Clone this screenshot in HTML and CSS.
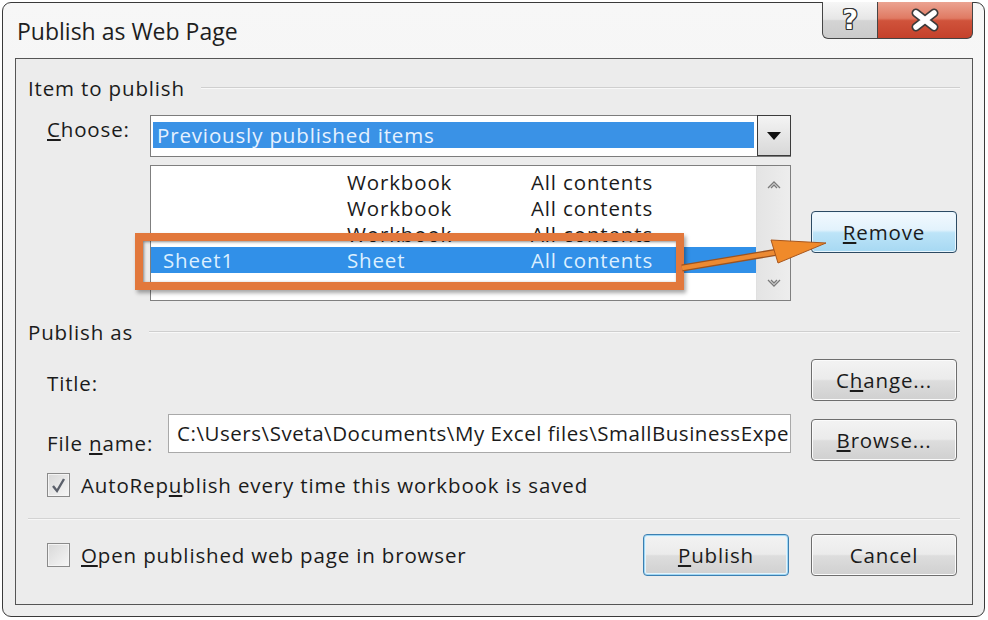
FILE: index.html
```html
<!DOCTYPE html>
<html lang="en">
<head>
  <meta charset="UTF-8">
  <title>Publish as Web Page</title>
  <link rel="stylesheet" href="styles.css">
</head>
<body>
  <div class="window">
    <div class="titlebar">
      <div class="title">Publish as Web Page</div>
      <div class="caption">
        <div class="cap-btn help"><span class="help-glyph">?</span></div>
        <div class="cap-btn close">
          <svg width="32" height="24" viewBox="0 0 32 24">
            <path d="M7 5 L25 19 M25 5 L7 19" stroke="#3b3b3b" stroke-width="9" stroke-linecap="round"/>
            <path d="M7 5 L25 19 M25 5 L7 19" stroke="#ffffff" stroke-width="5.5" stroke-linecap="round"/>
          </svg>
        </div>
      </div>
    </div>

    <div class="panel">
      <div class="group-head">Item to publish</div>

      <div class="choose-grid">
        <div class="label choose-label"><u>C</u>hoose:</div>
        <div class="combo">
          <div class="combo-value">Previously published items</div>
          <div class="combo-arrow">
            <svg width="14" height="8" viewBox="0 0 14 8"><path d="M0 0 H14 L7 8 Z" fill="#111"/></svg>
          </div>
        </div>

        <div class="listbox">
          <div class="list-rows">
            <div class="list-row"><span></span><span>Workbook</span><span>All contents</span></div>
            <div class="list-row"><span></span><span>Workbook</span><span>All contents</span></div>
            <div class="list-row"><span></span><span>Workbook</span><span>All contents</span></div>
            <div class="list-row selected"><span>Sheet1</span><span>Sheet</span><span>All contents</span></div>
          </div>
          <div class="scrollbar">
            <svg width="16" height="10" viewBox="0 0 16 10"><path d="M2 8 L8 2 L14 8 M5 8 L8 5 L11 8" fill="none" stroke="#7a7a7a" stroke-width="1.3"/></svg>
            <svg width="16" height="10" viewBox="0 0 16 10"><path d="M2 2 L8 8 L14 2 M5 2 L8 5 L11 2" fill="none" stroke="#7a7a7a" stroke-width="1.3"/></svg>
          </div>
        </div>
        <div class="btn hot remove-btn"><u>R</u>emove</div>
      </div>

      <div class="group-head second">Publish as</div>

      <div class="publish-grid">
        <div class="label">Title:</div>
        <div></div>
        <div class="btn">C<u>h</u>ange...</div>

        <div class="label">File <u>n</u>ame:</div>
        <div class="textbox">C:\Users\Sveta\Documents\My Excel files\SmallBusinessExpenses.htm</div>
        <div class="btn"><u>B</u>rowse...</div>
      </div>

      <div class="check-row">
        <div class="checkbox">
          <svg width="17" height="17" viewBox="0 0 17 17"><path d="M3 9 L7 14 L14 2" fill="none" stroke="#5a5f6a" stroke-width="2.4"/></svg>
        </div>
        <div class="label">AutoRep<u>u</u>blish every time this workbook is saved</div>
      </div>

      <div class="separator"></div>

      <div class="bottom-row">
        <div class="checkbox"></div>
        <div class="label"><u>O</u>pen published web page in browser</div>
        <div class="btn default publish-btn"><u>P</u>ublish</div>
        <div class="btn">Cancel</div>
      </div>
    </div>
  </div>

  <!-- annotation overlay -->
  <div class="callout"></div>
  <svg class="callout-arrow" width="160" height="50" viewBox="674 226 160 50">
    <path d="M682 268 L778 252" stroke="#9c5320" stroke-width="7"/>
    <path d="M682 268 L778 252" stroke="#ec8a33" stroke-width="4.5"/>
    <path d="M771 240 L826 243 L778 263 Z" fill="#f08a2a" stroke="#a8571e" stroke-width="1"/>
  </svg>
</body>
</html>
```

FILE: styles.css
```css
* {
  box-sizing: border-box;
}

body {
  margin: 0;
  background: #ffffff;
  font-family: "Open Sans", "Noto Sans", sans-serif;
  color: #1b1b1b;
  position: relative;
  width: 988px;
  height: 620px;
  overflow: hidden;
}

.window {
  margin: 2px 3px 3px 2px;
  height: 615px;
  border: 1px solid #3a3a3a;
  border-radius: 9px;
  background: linear-gradient(#f7f7f7, #eeeeee);
  padding: 0 11px 11px 12px;
  display: flex;
  flex-direction: column;
}

.titlebar {
  height: 55px;
  display: flex;
  align-items: flex-start;
}

.title {
  margin: 14px 0 0 2px;
  font-size: 23px;
  line-height: 28px;
  color: #1e1e1e;
}

.caption {
  margin-left: auto;
  margin-top: -1px;
  display: flex;
}

.cap-btn {
  height: 37px;
  border: 1px solid #454545;
  border-top: none;
  display: flex;
  align-items: center;
  justify-content: center;
}

.help {
  width: 56px;
  border-radius: 0 0 0 6px;
  background: linear-gradient(#f7f7f7 0%, #e6e6e6 48%, #d4d4d4 52%, #cbcbcb 100%);
}

.help-glyph {
  font-family: "DejaVu Sans", sans-serif;
  font-size: 27px;
  line-height: 30px;
  font-weight: bold;
  color: #ffffff;
  text-shadow: 1px 0 #333, -1px 0 #333, 0 1px #333, 0 -1px #333,
    1px 1px #333, -1px -1px #333, 1px -1px #333, -1px 1px #333;
}

.close {
  width: 95px;
  border-left: none;
  border-radius: 0 0 6px 0;
  background: linear-gradient(#eba391 0%, #e07a63 45%, #d0533b 52%, #c4412b 100%);
}

.panel {
  flex: 1;
  border: 1px solid #555555;
  background: #ececec;
  padding: 0 12px;
}

.group-head {
  display: flex;
  align-items: center;
  gap: 16px;
  font-size: 20.5px;
  letter-spacing: 0.85px;
  line-height: 24px;
  margin-top: 17px;
}

.group-head.second {
  margin-top: 19px;
}

.group-head::after {
  content: "";
  flex: 1;
  border-top: 1px solid #cfcfcf;
  border-bottom: 1px solid #f8f8f8;
}

.label {
  font-size: 20.5px;
  letter-spacing: 0.85px;
  line-height: 24px;
  white-space: nowrap;
}

.choose-grid {
  margin: 15px 0 0 19px;
  display: grid;
  grid-template-columns: 83px 641px 146px;
  column-gap: 20px;
  row-gap: 8px;
  align-items: start;
}

.choose-label {
  padding-top: 2px;
}

.combo {
  grid-column: 2;
  height: 42px;
  border: 1px solid #7c7c7c;
  background: #ffffff;
  display: flex;
  align-items: flex-start;
}

.combo-value {
  width: 601px;
  height: 26px;
  margin: 6px 0 0 2px;
  background: #3a92e6;
  color: #e6f1ff;
  font-size: 20.5px;
  letter-spacing: 0.85px;
  line-height: 26px;
  padding-left: 4px;
}

.combo-arrow {
  margin-left: auto;
  width: 34px;
  height: 41px;
  margin-top: -1px;
  margin-right: -1px;
  border: 1px solid #3c3c3c;
  background: linear-gradient(#f4f4f4, #d8d8d8);
  display: flex;
  align-items: center;
  justify-content: center;
}

.listbox {
  grid-column: 2;
  height: 136px;
  border: 1px solid #7f7f7f;
  background: #ffffff;
  display: flex;
}

.list-rows {
  flex: 1;
  padding-top: 3px;
}

.list-row {
  display: grid;
  grid-template-columns: 184px 184px 1fr;
  padding-left: 12px;
  height: 26px;
  font-size: 20.5px;
  letter-spacing: 0.85px;
  line-height: 26px;
  white-space: nowrap;
}

.list-row.selected {
  background: #3190e8;
  color: #dcefff;
}

.scrollbar {
  width: 34px;
  background: linear-gradient(90deg, #e4e4e4, #ededed);
  border-left: 1px solid #e0e0e0;
  display: flex;
  flex-direction: column;
  align-items: center;
  justify-content: space-between;
  padding: 14px 0 12px;
}

.btn {
  width: 146px;
  height: 42px;
  border: 1px solid #6e6e6e;
  border-radius: 4px;
  background: linear-gradient(#f3f3f3 0%, #ebebeb 48%, #dddddd 52%, #d0d0d0 100%);
  font-size: 20.5px;
  letter-spacing: 0.85px;
  line-height: 40px;
  text-align: center;
  white-space: nowrap;
  box-shadow: inset 0 0 0 1px #fbfbfb;
}

.remove-btn {
  grid-column: 3;
  grid-row: 2;
  margin-top: 46px;
}

.btn.hot {
  border-color: #2c4a63;
  background: linear-gradient(#f2f9fe 0%, #e2f2fc 45%, #bde4f8 52%, #a6d8f2 100%);
  box-shadow: inset 0 0 0 1px #e8f6fe;
}

.btn.default {
  border-color: #3c7fb1;
  box-shadow: inset 0 0 0 1px #9fd6f3, inset 0 0 0 2px #e5f4fc;
}

.publish-grid {
  margin: 15px 0 0 19px;
  display: grid;
  grid-template-columns: 101px 623px 146px;
  column-gap: 20px;
  row-gap: 18px;
  align-items: center;
}

.publish-grid .label {
  padding-top: 5px;
}

.textbox {
  align-self: start;
  margin-top: -5px;
  height: 39px;
  border: 1px solid #a9a9a9;
  background: #ffffff;
  font-size: 20.5px;
  letter-spacing: 0.55px;
  line-height: 37px;
  padding-left: 8px;
  white-space: nowrap;
  overflow: hidden;
}

.check-row {
  margin: 12px 0 0 19px;
  display: flex;
  align-items: center;
  gap: 11px;
}

.checkbox {
  width: 23px;
  height: 24px;
  border: 1px solid #8a8a8a;
  background: linear-gradient(135deg, #d8d8d8, #f6f6f6);
  box-shadow: inset 0 0 0 1px #f4f4f4;
  display: flex;
  align-items: center;
  justify-content: center;
}

.separator {
  margin-top: 21px;
  border-top: 1px solid #d3d3d3;
  border-bottom: 1px solid #f7f7f7;
}

.bottom-row {
  margin: 14px 3px 0 19px;
  display: flex;
  align-items: center;
  gap: 11px;
}

.publish-btn {
  margin-left: auto;
  margin-right: 11px;
}

.callout {
  position: absolute;
  left: 135px;
  top: 233px;
  width: 549px;
  height: 57px;
  border: 8px solid #e2783c;
  box-shadow: 2px 3px 4px rgba(0, 0, 0, 0.35), inset 1px 1px 3px rgba(0, 0, 0, 0.45);
}

.callout-arrow {
  position: absolute;
  left: 674px;
  top: 226px;
}
```
